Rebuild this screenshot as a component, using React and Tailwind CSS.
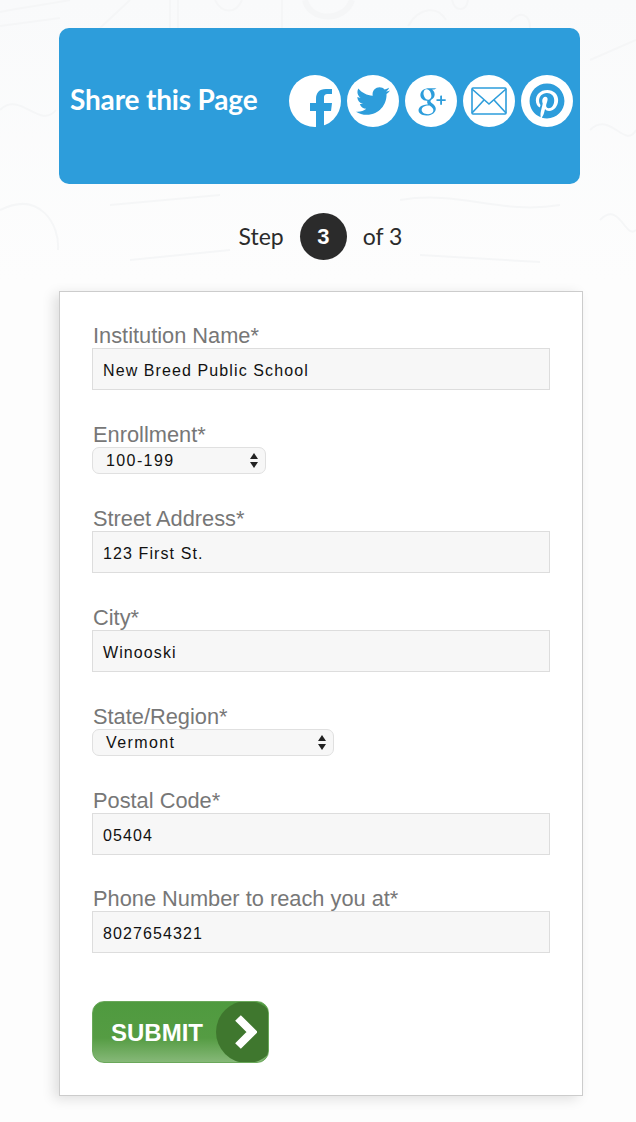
import React from 'react';
import { FaTwitter, FaPinterest } from 'react-icons/fa';
import { TiSocialGooglePlus } from 'react-icons/ti';

const BLUE = '#2d9ddb';

const FacebookIcon = () => (
  <svg width="52" height="52" viewBox="0 0 52 52">
    <circle cx="26" cy="26" r="26" fill="#fff" />
    <path
      fill={BLUE}
      d="M35 52 V36 H42 L43 28 H35 V23 C35 20 36 19 39 19 H43 V14 H37 C30 14 27 18 27 24 V28 H21 V36 H27 V52 Z"
    />
  </svg>
);

const MailIcon = () => (
  <svg width="36" height="30" viewBox="0 0 36 30" fill="none" stroke={BLUE} strokeWidth="1.6">
    <rect x="1" y="2" width="34" height="26" rx="1" />
    <path d="M1 3 L18 18 L35 3" />
    <path d="M1 27 L13 14" />
    <path d="M35 27 L23 14" />
  </svg>
);

// faint doodles behind the top of the page
const Doodles = () => (
  <svg className="absolute left-0 top-0" width="636" height="300" viewBox="0 0 636 300" fill="none" stroke="#f5f6f7" strokeWidth="2">
    <path d="M0 12 C30 6 50 4 70 0" />
    <path d="M0 26 L60 18" />
    <path d="M100 28 L130 0" />
    <path d="M170 0 V28" />
    <path d="M178 0 V28" />
    <path d="M215 0 C222 14 236 14 242 0" />
    <path d="M282 0 V28" />
    <path d="M305 0 C310 22 345 22 352 0" strokeWidth="6" />
    <path d="M408 26 C420 6 438 6 446 20" />
    <path d="M452 0 C455 12 466 12 468 0" />
    <path d="M510 22 C520 10 530 14 530 28" />
    <path d="M0 210 C40 190 60 225 58 250" />
    <path d="M590 60 L636 40" />
    <path d="M590 130 C610 110 625 150 636 130" />
    <path d="M600 220 C620 200 625 240 636 230" />
    <path d="M0 110 C20 90 40 130 56 110" />
    <path d="M110 205 L220 195" />
    <path d="M400 200 C460 190 500 215 560 205" />
    <path d="M130 260 L230 250" />
    <path d="M420 255 L540 262" />
  </svg>
);

const Circle = ({ children }) => (
  <div className="flex h-[52px] w-[52px] items-center justify-center rounded-full bg-white">{children}</div>
);

const FieldLabel = ({ children }) => (
  <div className="h-6 pl-px text-[21.8px] leading-6 text-[#777]">{children}</div>
);

const TextField = ({ label, value }) => (
  <div className="mb-[33px]">
    <FieldLabel>{label}</FieldLabel>
    <div className="flex h-[42px] w-[458px] items-center border border-[#dddddd] bg-[#f7f7f7] pl-[10px] pt-[3px] text-[16px] tracking-[1.1px] text-[#111]">
      {value}
    </div>
  </div>
);

const SelectField = ({ label, value, width }) => (
  <div className="mb-[33px]">
    <FieldLabel>{label}</FieldLabel>
    <div className={`flex h-[27px] items-center justify-between rounded-[7px] border border-[#e0e0e0] bg-[#f7f7f7] pl-[13px] pr-[7px] text-[16px] tracking-[1.4px] text-[#111] ${width}`}>
      {value}
      <svg width="8" height="17" viewBox="0 0 8 17" fill="#222">
        <path d="M4 1 L8 7 H0 Z" />
        <path d="M4 16 L8 10 H0 Z" />
      </svg>
    </div>
  </div>
);

export default function App() {
  return (
    <div className="relative min-h-[1122px] w-[636px] overflow-hidden bg-[linear-gradient(#f9fafb_0px,#fdfdfd_280px)] pt-7 font-['Liberation_Sans',sans-serif]">
      <Doodles />

      {/* Share banner */}
      <div className="relative ml-[59px] h-[156px] w-[521px] rounded-[10px] bg-[#2d9ddb] pl-[11px] pt-[47px]">
        <div className="flex items-center justify-between pr-[7px]">
          <span className="mb-[5px] font-['Lato',sans-serif] text-[28px] font-bold tracking-[-0.17px] text-white">Share this Page</span>
          <div className="flex gap-[6px]">
            <FacebookIcon />
            <Circle><FaTwitter className="h-[34px] w-[34px] text-[#2d9ddb]" /></Circle>
            <Circle><TiSocialGooglePlus className="h-[44px] w-[44px] text-[#2d9ddb]" /></Circle>
            <Circle><MailIcon /></Circle>
            <Circle><FaPinterest className="h-[36px] w-[36px] text-[#2d9ddb]" /></Circle>
          </div>
        </div>
      </div>

      {/* Step indicator */}
      <div className="relative mt-[29px] flex items-center justify-center gap-4 pl-[5px] font-['Lato',sans-serif] text-[23px] text-[#2b2b2b]">
        <span>Step</span>
        <div className="flex h-[47px] w-[47px] items-center justify-center rounded-full bg-[#2b2b2b] font-['Liberation_Sans',sans-serif] text-[22px] font-bold text-white">3</div>
        <span>of 3</span>
      </div>

      {/* Form card */}
      <div className="relative ml-[59px] mt-[31px] h-[805px] w-[524px] border border-[#cccccc] bg-white pl-[32px] pt-[32px] shadow-[-5px_3px_12px_rgba(0,0,0,0.12)]">
        <TextField label="Institution Name*" value="New Breed Public School" />
        <SelectField label="Enrollment*" value="100-199" width="w-[174px]" />
        <TextField label="Street Address*" value="123 First St." />
        <TextField label="City*" value="Winooski" />
        <SelectField label="State/Region*" value="Vermont" width="w-[242px]" />
        <div className="-mb-px">
          <TextField label="Postal Code*" value="05404" />
        </div>
        <TextField label="Phone Number to reach you at*" value="8027654321" />
        <div className="relative mt-[48px] flex h-[62px] w-[177px] items-center overflow-hidden rounded-[12px] border border-[#6aa85a] bg-[linear-gradient(#4f9a3f_0%,#559c43_60%,#86b878_100%)] pl-[18px] pt-px text-[24px] font-bold text-white">
          SUBMIT
          <div className="absolute right-[-10px] top-[-1px] flex h-[62px] w-[62px] items-center justify-center rounded-full bg-[#3f772e] pr-[2px]">
            <svg width="22" height="34" viewBox="0 0 22 34" fill="none" stroke="#fff" strokeWidth="8">
              <path d="M3 3 L17 17 L3 31" />
            </svg>
          </div>
        </div>
      </div>
    </div>
  );
}
